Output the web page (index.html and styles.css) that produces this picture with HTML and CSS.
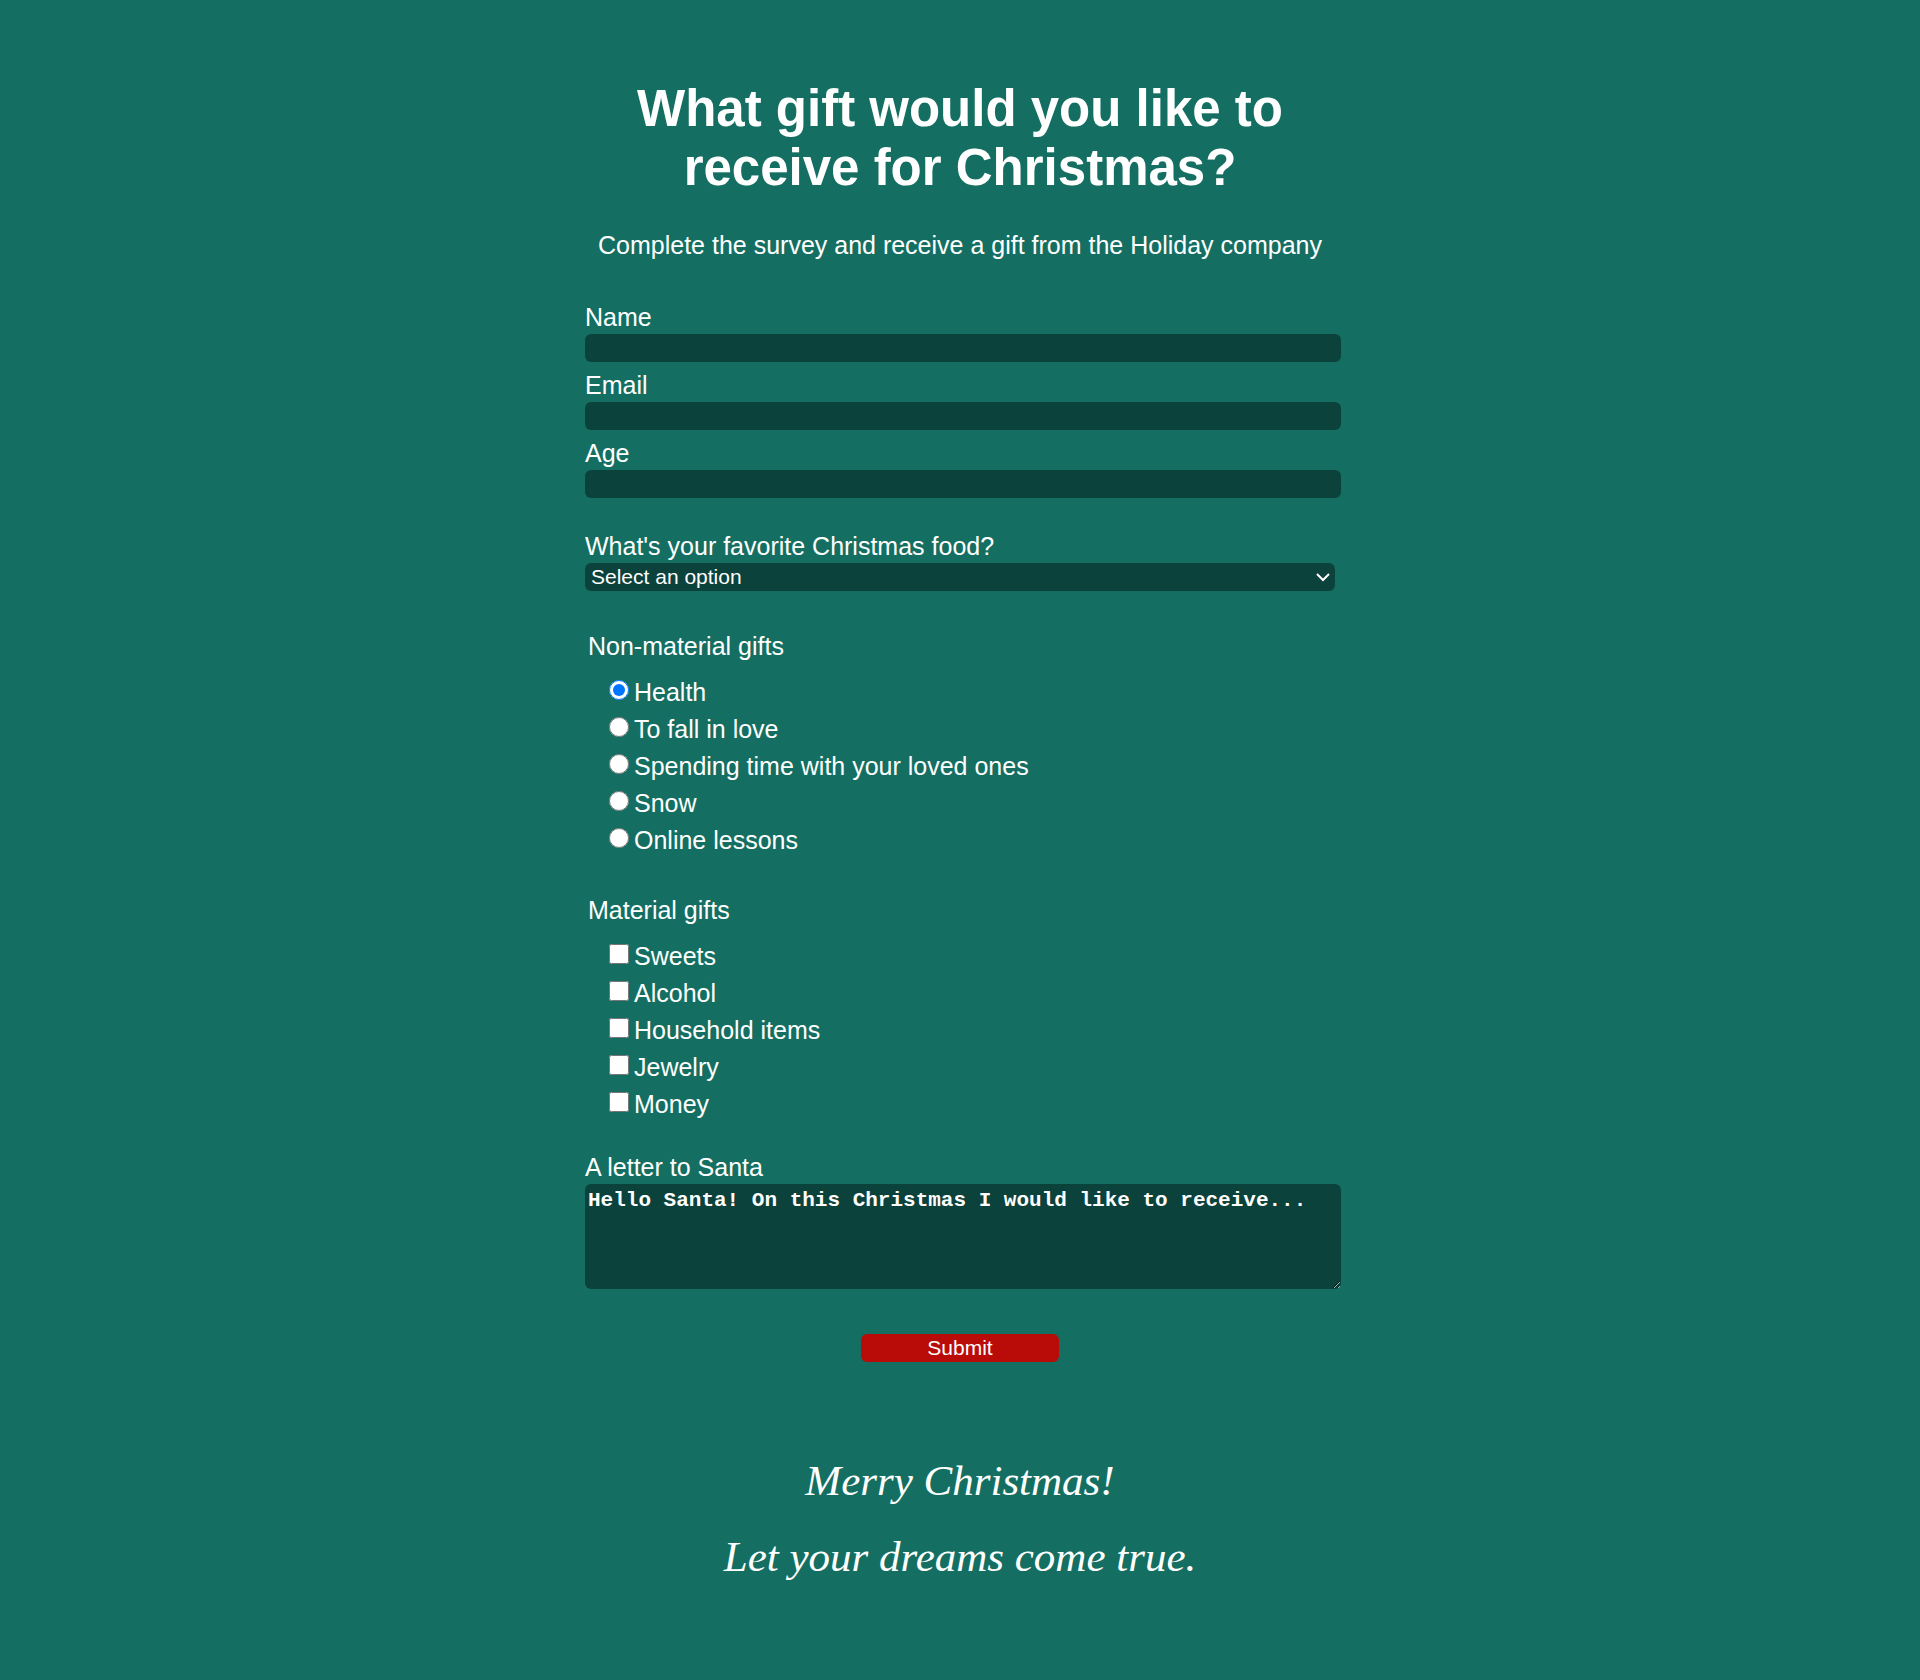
FILE: index.html
```html
<!DOCTYPE html>
<html lang="en">
<head>
  <meta charset="UTF-8">
  <meta name="viewport" content="width=device-width, initial-scale=1">
  <title>Christmas survey</title>
  <link rel="stylesheet" href="styles.css">
</head>
<body>
  <main class="page">
    <header class="intro">
      <h1 class="title">What gift would you like to receive for Christmas?</h1>
      <p class="description">Complete the survey and receive a gift from the Holiday company</p>
    </header>

    <form class="survey">
      <div class="fields">
        <div class="field">
          <label for="name">Name</label>
          <input class="control" type="text" id="name" name="name">
        </div>
        <div class="field">
          <label for="email">Email</label>
          <input class="control" type="email" id="email" name="email">
        </div>
        <div class="field">
          <label for="age">Age</label>
          <input class="control" type="text" inputmode="numeric" id="age" name="age">
        </div>
      </div>

      <div class="field">
        <label for="food">What's your favorite Christmas food?</label>
        <select class="control dropdown" id="food" name="food">
          <option>Select an option</option>
        </select>
      </div>

      <fieldset class="choices">
        <legend>Non-material gifts</legend>
        <label class="choice"><input type="radio" name="wish" value="health" checked>Health</label>
        <label class="choice"><input type="radio" name="wish" value="love">To fall in love</label>
        <label class="choice"><input type="radio" name="wish" value="time">Spending time with your loved ones</label>
        <label class="choice"><input type="radio" name="wish" value="snow">Snow</label>
        <label class="choice"><input type="radio" name="wish" value="lessons">Online lessons</label>
      </fieldset>

      <fieldset class="choices">
        <legend>Material gifts</legend>
        <label class="choice"><input type="checkbox" name="gift" value="sweets">Sweets</label>
        <label class="choice"><input type="checkbox" name="gift" value="alcohol">Alcohol</label>
        <label class="choice"><input type="checkbox" name="gift" value="household">Household items</label>
        <label class="choice"><input type="checkbox" name="gift" value="jewelry">Jewelry</label>
        <label class="choice"><input type="checkbox" name="gift" value="money">Money</label>
      </fieldset>

      <div class="field">
        <label for="letter">A letter to Santa</label>
        <textarea class="control letter" id="letter" name="letter" rows="4" placeholder="Hello Santa! On this Christmas I would like to receive..."></textarea>
      </div>

      <button class="submit" type="submit">Submit</button>
    </form>

    <footer class="wishes">
      <p>Merry Christmas!</p>
      <p>Let your dreams come true.</p>
    </footer>
  </main>
</body>
</html>
```
FILE: styles.css
```css
body {
  margin: 0;
  background: #146f62;
  color: #fff;
  font-family: "Liberation Sans", Helvetica, Arial, sans-serif;
  font-size: 25px;
  line-height: 30px;
}

.page {
  max-width: 750px;
  margin: 0 auto;
  padding: 79px 16px 60px;
}

.intro {
  text-align: center;
}

.title {
  margin: 0;
  font-size: 51px;
  line-height: 59px;
}

.description {
  margin: 33px 0 42px;
}

.survey {
  display: flex;
  flex-direction: column;
  gap: 33px;
}

.fields {
  display: flex;
  flex-direction: column;
  gap: 8px;
}

.field {
  display: flex;
  flex-direction: column;
  align-items: flex-start;
  gap: 2px;
}

.control {
  width: 100%;
  height: 24px;
  padding: 2px 3px;
  border: 0;
  border-radius: 6px;
  background-color: #0c423c;
  color: #fff;
  font: 21px/24px "Liberation Sans", Helvetica, Arial, sans-serif;
}

.control::placeholder {
  color: #fff;
}

.dropdown {
  box-sizing: border-box;
  height: 28px;
  padding: 2px 32px 2px 6px;
  appearance: none;
  background-image: url("data:image/svg+xml,%3Csvg xmlns='http://www.w3.org/2000/svg' width='14' height='9'%3E%3Cpath d='M1 1l6 6 6-6' fill='none' stroke='white' stroke-width='2'/%3E%3C/svg%3E");
  background-repeat: no-repeat;
  background-position: right 5px center;
}

.letter {
  height: 99px;
  padding-top: 4px;
  font: bold 21px/26px "Liberation Mono", "Courier New", monospace;
}

.choices {
  margin: 7px 0 0;
  padding: 16px 24px 0;
  border: 0;
}

.choices legend {
  margin-left: -21px;
  padding: 0;
}

.choice {
  display: flex;
  align-items: center;
  gap: 5px;
  margin-bottom: 7px;
}

.choice:last-child {
  margin-bottom: 0;
}

.choice input {
  width: 20px;
  height: 20px;
  margin: 0 0 4px;
}

.submit {
  align-self: center;
  width: 198px;
  height: 28px;
  margin-top: 12px;
  padding: 0;
  border: 0;
  border-radius: 6px;
  background: #b90c09;
  color: #fff;
  font: 21px/28px "Liberation Sans", Helvetica, Arial, sans-serif;
}

.wishes {
  margin-top: 81px;
  text-align: center;
  font: italic 43px/76px "Liberation Serif", "Times New Roman", cursive;
}

.wishes p {
  margin: 0;
}
```
